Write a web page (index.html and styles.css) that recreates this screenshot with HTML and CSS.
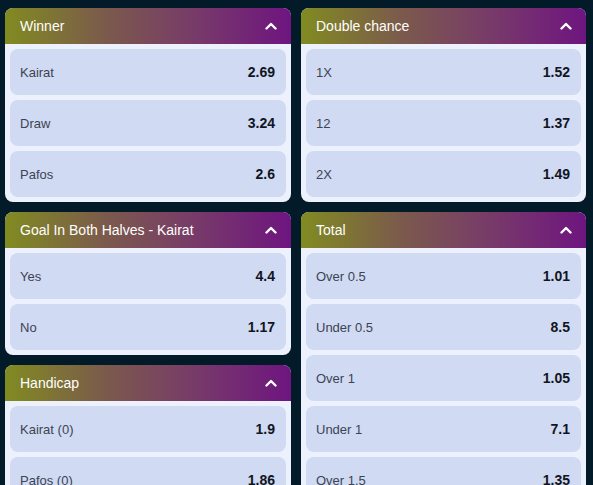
FILE: index.html
```html
<!DOCTYPE html>
<html>
<head>
<meta charset="utf-8">
<link rel="stylesheet" href="styles.css">
</head>
<body>
<div class="grid">
  <div class="col">
    <section class="card">
      <header class="head"><span>Winner</span><svg class="chev" viewBox="0 0 12 8" width="12" height="8"><path d="M1.5 6.5 L6 2 L10.5 6.5" /></svg></header>
      <div class="body">
        <div class="row"><span class="lbl">Kairat</span><span class="odd">2.69</span></div>
        <div class="row"><span class="lbl">Draw</span><span class="odd">3.24</span></div>
        <div class="row"><span class="lbl">Pafos</span><span class="odd">2.6</span></div>
      </div>
    </section>
    <section class="card">
      <header class="head"><span>Goal In Both Halves - Kairat</span><svg class="chev" viewBox="0 0 12 8" width="12" height="8"><path d="M1.5 6.5 L6 2 L10.5 6.5" /></svg></header>
      <div class="body">
        <div class="row"><span class="lbl">Yes</span><span class="odd">4.4</span></div>
        <div class="row"><span class="lbl">No</span><span class="odd">1.17</span></div>
      </div>
    </section>
    <section class="card">
      <header class="head"><span>Handicap</span><svg class="chev" viewBox="0 0 12 8" width="12" height="8"><path d="M1.5 6.5 L6 2 L10.5 6.5" /></svg></header>
      <div class="body">
        <div class="row"><span class="lbl">Kairat (0)</span><span class="odd">1.9</span></div>
        <div class="row"><span class="lbl">Pafos (0)</span><span class="odd">1.86</span></div>
      </div>
    </section>
  </div>
  <div class="col">
    <section class="card">
      <header class="head"><span>Double chance</span><svg class="chev" viewBox="0 0 12 8" width="12" height="8"><path d="M1.5 6.5 L6 2 L10.5 6.5" /></svg></header>
      <div class="body">
        <div class="row"><span class="lbl">1X</span><span class="odd">1.52</span></div>
        <div class="row"><span class="lbl">12</span><span class="odd">1.37</span></div>
        <div class="row"><span class="lbl">2X</span><span class="odd">1.49</span></div>
      </div>
    </section>
    <section class="card">
      <header class="head"><span>Total</span><svg class="chev" viewBox="0 0 12 8" width="12" height="8"><path d="M1.5 6.5 L6 2 L10.5 6.5" /></svg></header>
      <div class="body">
        <div class="row"><span class="lbl">Over 0.5</span><span class="odd">1.01</span></div>
        <div class="row"><span class="lbl">Under 0.5</span><span class="odd">8.5</span></div>
        <div class="row"><span class="lbl">Over 1</span><span class="odd">1.05</span></div>
        <div class="row"><span class="lbl">Under 1</span><span class="odd">7.1</span></div>
        <div class="row"><span class="lbl">Over 1.5</span><span class="odd">1.35</span></div>
      </div>
    </section>
  </div>
</div>
</body>
</html>
```

FILE: styles.css
```css
html, body {
  margin: 0;
  padding: 0;
  background: #031a29;
  height: 100%;
  overflow: hidden;
}
body {
  font-family: "Liberation Sans", Arial, sans-serif;
}
.grid {
  display: grid;
  grid-template-columns: 286px 285px;
  column-gap: 10px;
  padding: 8px 7px 0 5px;
}
.col {
  display: flex;
  flex-direction: column;
  gap: 10px;
}
.card {
  background: #ecf1fd;
  border-radius: 8px;
  overflow: hidden;
}
.head {
  height: 36px;
  display: flex;
  align-items: center;
  justify-content: space-between;
  padding: 0 14px 0 15px;
  background: linear-gradient(90deg, #818b21 0%, #7b5a4c 35%, #783c68 65%, #6e1580 100%);
  color: #ffffff;
  font-size: 14px;
}
.chev {
  fill: none;
  stroke: #ffffff;
  stroke-width: 2.4;
  stroke-linecap: round;
  stroke-linejoin: round;
}
.body {
  display: flex;
  flex-direction: column;
  gap: 5px;
  padding: 5px;
}
.row {
  height: 46px;
  background: #d0daf2;
  border-radius: 8px;
  display: flex;
  align-items: center;
  justify-content: space-between;
  padding: 0 11px 0 10px;
  font-size: 13px;
}
.lbl {
  color: #3c4354;
}
.odd {
  color: #111522;
  font-weight: 700;
  font-size: 14px;
}
```
